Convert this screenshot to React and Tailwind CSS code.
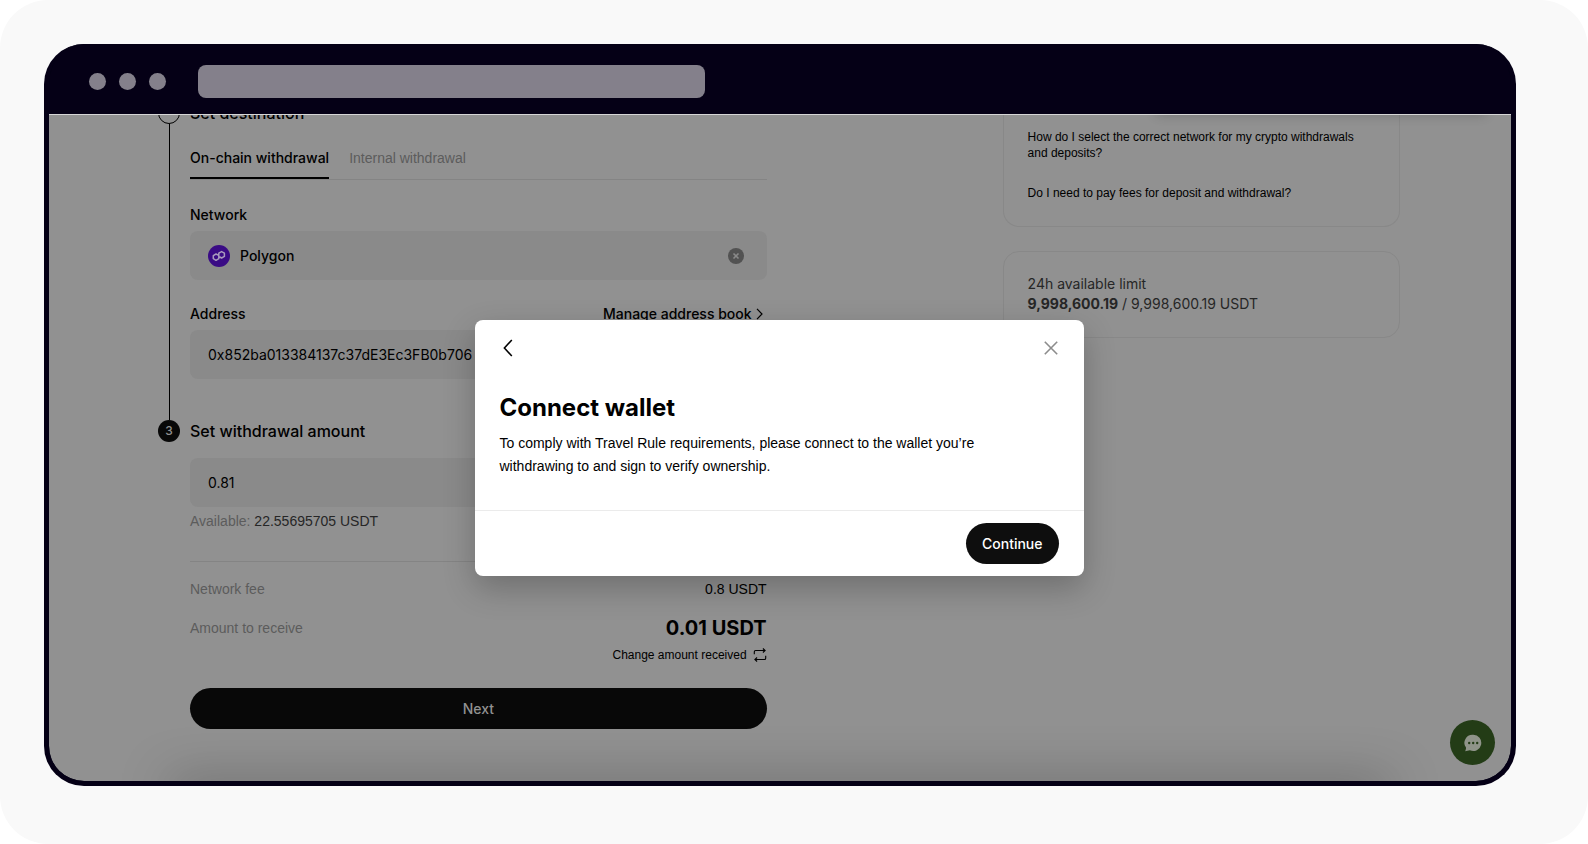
import { useState } from 'react';

function PolygonLogo() {
  return (
    <svg viewBox="0 0 22 22" className="size-[22px] shrink-0" fill="none" aria-hidden="true">
      <circle cx="11" cy="11" r="11" fill="#3a0b85" />
      <path
        d="M10.2 10.2 8 9 5.3 10.6v3.1L8 15.3l2.8-1.6V8.2l2.8-1.6 2.8 1.6v3.2L13.6 13l-1.8-1"
        stroke="#a99bbd"
        strokeWidth="1.5"
        strokeLinejoin="round"
        strokeLinecap="round"
      />
    </svg>
  );
}

function ClearIcon() {
  return (
    <svg viewBox="0 0 16 16" className="size-4" fill="none" aria-hidden="true">
      <circle cx="8" cy="8" r="8" fill="#525252" />
      <path d="m5.5 5.5 5 5m0-5-5 5" stroke="#8a8a8a" strokeWidth="1.6" />
    </svg>
  );
}

function SwapIcon() {
  return (
    <svg viewBox="0 0 14 14" className="size-3.5" fill="none" stroke="currentColor" strokeWidth="1.1" aria-hidden="true">
      <path d="M1.3 6.3V3.8c0-.8.4-1.3 1.3-1.3h9.3M9.9.5l2.2 2-2.2 2" />
      <path d="M12.7 7.7v2.5c0 .8-.4 1.3-1.3 1.3H2.1M4.1 9.5l-2.2 2 2.2 2" />
    </svg>
  );
}

function ChatIcon() {
  return (
    <svg viewBox="0 0 18 18" className="size-[18px]" aria-hidden="true">
      <path d="M9.3.8a8.1 8.1 0 1 1-3.4 15.5c-1.6.2-3.3.6-4.7.9.5-1 .7-2.2.9-3.4A8.1 8.1 0 0 1 9.3.8Z" fill="#8f9489" />
      <circle cx="5.2" cy="9" r="1.2" fill="#233c16" />
      <circle cx="9.2" cy="9" r="1.2" fill="#233c16" />
      <circle cx="13.2" cy="9" r="1.2" fill="#233c16" />
    </svg>
  );
}

function TitleBar() {
  return (
    <header className="flex h-[70px] items-center gap-8 bg-[#050016] pt-[5px] pr-10 pl-10">
      <div className="flex gap-[13px]">
        <span className="size-[17px] rounded-full bg-[#84808b]" />
        <span className="size-[17px] rounded-full bg-[#84808b]" />
        <span className="size-[17px] rounded-full bg-[#84808b]" />
      </div>
      <div className="h-[33px] w-[36.7%] rounded-lg bg-[#84808b]" />
    </header>
  );
}

function WithdrawForm() {
  const [tab, setTab] = useState('chain');
  const tabClass = (name) =>
    tab === name
      ? "border-b-2 border-black pb-[9px] font-['Inter',sans-serif] font-medium text-black"
      : 'border-b-2 border-transparent pb-[9px] text-[#5c5c5c]';

  return (
    <form className="-mt-[13px] w-[49%] pb-[52px]" onSubmit={(e) => e.preventDefault()}>
      <section className="flex gap-2.5">
        <div className="flex w-[22px] shrink-0 flex-col items-center">
          <span className="size-[22px] rounded-full border border-black" />
          <span className="w-px flex-1 bg-black" />
        </div>
        <div className="min-w-0 flex-1 pb-[41px]">
          <h2 className="font-['Inter',sans-serif] text-base leading-[22px] font-medium">Set destination</h2>
          <div className="mt-6 flex gap-5 border-b border-[#848484]">
            <button type="button" className={tabClass('chain')} onClick={() => setTab('chain')}>
              On-chain withdrawal
            </button>
            <button type="button" className={tabClass('internal')} onClick={() => setTab('internal')}>
              Internal withdrawal
            </button>
          </div>

          <label htmlFor="network" className="mt-[25px] block font-['Inter',sans-serif] font-medium">Network</label>
          <div className="mt-1.5 flex h-[49px] items-center gap-2.5 rounded-lg bg-[#8a8a8a] pr-[23px] pl-[18px]">
            <PolygonLogo />
            <input
              id="network"
              defaultValue="Polygon"
              className="min-w-0 flex-1 font-['Inter',sans-serif] font-medium outline-none"
            />
            <button type="button" aria-label="Clear network">
              <ClearIcon />
            </button>
          </div>

          <div className="mt-6 flex justify-between font-['Inter',sans-serif] font-medium">
            <label htmlFor="address">Address</label>
            <a href="#address-book" className="flex items-center gap-1 pr-1">
              Manage address book
              <svg viewBox="0 0 7 12" className="h-3 w-[7px]" fill="none" stroke="currentColor" strokeWidth="1.2" aria-hidden="true">
                <path d="m1 .8 5 5.2-5 5.2" />
              </svg>
            </a>
          </div>
          <input
            id="address"
            defaultValue="0x852ba013384137c37dE3Ec3FB0b706"
            className="mt-1.5 h-[49px] w-full rounded-lg bg-[#8a8a8a] px-[18px] font-['Inter',sans-serif] outline-none"
          />
        </div>
      </section>

      <section className="flex gap-2.5">
        <span className="flex size-[22px] shrink-0 items-center justify-center rounded-full bg-[#080808] font-['Inter',sans-serif] text-xs font-medium text-[#919191]">
          3
        </span>
        <div className="min-w-0 flex-1">
          <h2 className="font-['Inter',sans-serif] text-base leading-[22px] font-medium">
            <label htmlFor="amount">Set withdrawal amount</label>
          </h2>
          <input
            id="amount"
            defaultValue="0.81"
            className="mt-4 h-[49px] w-full rounded-lg bg-[#8a8a8a] px-[18px] font-['Inter',sans-serif] outline-none"
          />
          <p className="mt-1 text-[#262626]">
            <span className="text-[#5c5c5c]">Available:</span> 22.55695705 USDT
          </p>

          <div className="mt-[30px] flex justify-between border-t border-[#848484] pt-[17px]">
            <span className="text-[#5c5c5c]">Network fee</span>
            <span>0.8 USDT</span>
          </div>
          <div className="mt-[15px] flex items-center justify-between">
            <span className="text-[#5c5c5c]">Amount to receive</span>
            <span className="font-['Inter',sans-serif] text-xl font-bold">0.01 USDT</span>
          </div>
          <button type="button" className="mt-1 ml-auto flex items-center gap-1.5 text-xs leading-[18px]">
            Change amount received
            <SwapIcon />
          </button>
          <button
            type="submit"
            className="mt-6 h-[41px] w-full rounded-full bg-[#080808] font-['Inter',sans-serif] font-medium text-[#919191]"
          >
            Next
          </button>
        </div>
      </section>
    </form>
  );
}

function Sidebar() {
  return (
    <aside className="w-[32%]">
      <div className="rounded-b-2xl border border-t-0 border-[#888888] px-6 pt-3.5 pb-[25px] text-xs">
        <a href="#network-help" className="block">
          How do I select the correct network for my crypto withdrawals and deposits?
        </a>
        <a href="#fees-help" className="mt-6 block">
          Do I need to pay fees for deposit and withdrawal?
        </a>
      </div>
      <div className="mt-6 rounded-2xl border border-[#888888] px-6 pt-[22px] pb-[23px] font-['Inter',sans-serif] text-[#262626]">
        <p>24h available limit</p>
        <p>
          <strong>9,998,600.19</strong> / 9,998,600.19 USDT
        </p>
      </div>
    </aside>
  );
}

function ConnectWalletDialog() {
  return (
    <div
      role="dialog"
      aria-labelledby="dialog-title"
      className="w-full max-w-[609px] rounded-lg bg-white shadow-[0_12px_32px_rgba(0,0,0,0.24)]"
    >
      <div className="flex items-center justify-between px-6 pt-[19px]">
        <button type="button" aria-label="Back" className="px-1">
          <svg viewBox="0 0 10 18" className="h-[18px] w-2.5" fill="none" stroke="black" strokeWidth="1.6" aria-hidden="true">
            <path d="M8.8 1 1.4 9l7.4 8" />
          </svg>
        </button>
        <button type="button" aria-label="Close" className="px-0.5">
          <svg viewBox="0 0 14 14" className="size-3.5" fill="none" stroke="#8c8c8c" strokeWidth="1.6" aria-hidden="true">
            <path d="m.8.8 12.4 12.4m0-12.4L.8 13.2" />
          </svg>
        </button>
      </div>
      <div className="px-[25px] pt-[35px] pb-8">
        <h1 id="dialog-title" className="font-['Inter',sans-serif] text-2xl font-bold">Connect wallet</h1>
        <p className="mt-2 pr-12 leading-[23px]">
          To comply with Travel Rule requirements, please connect to the wallet you’re withdrawing to and sign to verify
          ownership.
        </p>
      </div>
      <div className="flex justify-end border-t border-[#ebebeb] px-[25px] py-3">
        <button
          type="button"
          className="h-[41px] rounded-full bg-[#0e0e0e] px-4 font-['Inter',sans-serif] font-medium text-white"
        >
          Continue
        </button>
      </div>
    </div>
  );
}

export default function App() {
  return (
    <div className="flex min-h-screen flex-col rounded-[48px] bg-[#f9f9f9] pt-11 pr-[72px] pb-[58px] pl-11 font-['Liberation_Sans',Arial,sans-serif] text-sm text-black">
      <div className="flex flex-1 flex-col overflow-hidden rounded-[40px] border-x-[5px] border-b-[5px] border-[#050016] bg-[#050016]">
        <TitleBar />
        <main className="relative flex-1 overflow-hidden rounded-b-[35px] border-t border-[#d6d6d6] bg-[#919191]">
          <div className="flex items-start justify-between pr-[111px] pl-[109px]">
            <WithdrawForm />
            <Sidebar />
          </div>
          <div className="pointer-events-none absolute inset-x-[120px] -bottom-5 h-5 shadow-[0_0_50px_rgba(0,0,0,0.35)]" />
          <div className="pointer-events-none absolute -top-5 right-[25px] h-5 w-[330px] shadow-[0_0_12px_rgba(0,0,0,0.2)]" />
          <button
            type="button"
            aria-label="Chat"
            className="absolute right-4 bottom-4 flex size-[45px] items-center justify-center rounded-full bg-[#233c16]"
          >
            <ChatIcon />
          </button>
          <div className="absolute inset-0 flex items-center justify-center pr-0.5">
            <ConnectWalletDialog />
          </div>
        </main>
      </div>
    </div>
  );
}
